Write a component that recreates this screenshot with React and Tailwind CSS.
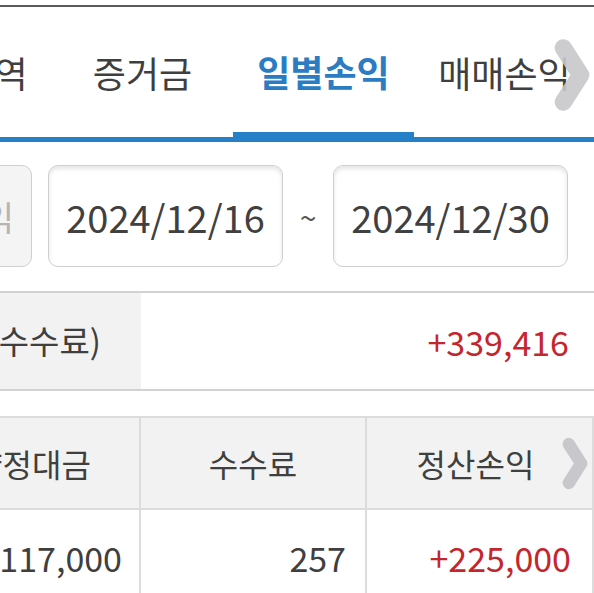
import React from 'react';

const font = "font-['Noto_Sans_CJK_KR','Noto_Sans',sans-serif]";

function Chevron({ className, width = 13 }) {
  return (
    <svg viewBox="0 0 30 60" className={className} fill="none">
      <polyline points="8,8 22,30 8,52" stroke="#c8c8cc" strokeWidth={width} strokeLinecap="round" strokeLinejoin="round" />
    </svg>
  );
}

function Tabs() {
  const tabs = ["체결내역", "증거금", "일별손익", "매매손익"];
  return (
    <div className="relative overflow-hidden border-b-[5px] border-[#2680c8]">
      <div className="flex ml-[-129px]">
        {tabs.map((t) => (
          <div
            key={t}
            className={
              "w-[181px] h-[130px] shrink-0 flex items-center justify-center text-[36px] " +
              (t === "일별손익" ? "text-[#2b7cc3] font-bold border-b-[5px] border-[#2680c8] pt-[3px]" : "text-[#3f3f3f]")
            }
          >
            {t}
          </div>
        ))}
      </div>
      <Chevron className="absolute left-[553px] top-[31px] w-[38px] h-[74px] opacity-90" width={14} />
    </div>
  );
}

function DateRow() {
  return (
    <div className="overflow-hidden pt-[23px] pb-[24px]">
      <div className="flex items-center">
        <div className="w-[120px] ml-[-88px] h-[102px] shrink-0 rounded-[10px] border-[1.5px] border-[#cfcfcf] bg-[#f4f4f4] flex items-center justify-end pr-[17px] text-[34px] text-[#b4b4b4]">
          손익
        </div>
        <div className="ml-[16px] w-[235px] h-[102px] shrink-0 rounded-[10px] border-[1.5px] border-[#cfcfcf] bg-white shadow-[inset_0_3px_4px_rgba(0,0,0,0.10)] flex items-center justify-center text-[38px] text-[#404040]">
          2024/12/16
        </div>
        <div className="w-[50px] shrink-0 text-center text-[30px] text-[#555]">~</div>
        <div className="w-[235px] h-[102px] shrink-0 rounded-[10px] border-[1.5px] border-[#cfcfcf] bg-white shadow-[inset_0_3px_4px_rgba(0,0,0,0.10)] flex items-center justify-center text-[38px] text-[#404040]">
          2024/12/30
        </div>
      </div>
    </div>
  );
}

function Summary() {
  return (
    <div className="flex h-[100px] border-y-2 border-[#d2d2d2] overflow-hidden">
      <div className="w-[141px] shrink-0 bg-[#f2f2f2] flex items-center justify-end pr-[40px] whitespace-nowrap text-[33px] text-[#3f3f3f]">
        손익 -수수료)
      </div>
      <div className="flex-1 flex items-center justify-end pr-[25px] text-[34px] text-[#c4262e]">
        +339,416
      </div>
    </div>
  );
}

function Table() {
  return (
    <div className="relative mt-[25px] overflow-hidden border-r-2 border-[#dcdcdc]">
      <div className="flex ml-[-85px] h-[94px] bg-[#f2f2f2] border-y-2 border-[#dcdcdc] text-[32px] text-[#3f3f3f]">
        <div className="w-[226px] shrink-0 flex items-center justify-center pl-[10px] border-r-2 border-[#dcdcdc]">약정대금</div>
        <div className="w-[226px] shrink-0 flex items-center justify-center border-r-2 border-[#dcdcdc]">수수료</div>
        <div className="flex-1 flex items-center justify-center pr-[8px]">정산손익</div>
      </div>
      <div className="flex ml-[-85px] h-[95px] text-[34px] text-[#3f3f3f]">
        <div className="w-[226px] shrink-0 flex items-center justify-end pr-[17px] border-r-2 border-[#dcdcdc]">11,117,000</div>
        <div className="w-[226px] shrink-0 flex items-center justify-end pr-[19px] border-r-2 border-[#dcdcdc]">257</div>
        <div className="flex-1 flex items-center justify-end pr-[21px] text-[#c4262e]">+225,000</div>
      </div>
      <Chevron className="absolute left-[558px] top-[21px] w-[34px] h-[53px]" width={14} />
    </div>
  );
}

export default function App() {
  return (
    <div className={"w-[594px] h-[593px] overflow-hidden bg-white " + font}>
      <div className="mt-[5px] border-t-2 border-[#5b5b5b]" />
      <Tabs />
      <DateRow />
      <Summary />
      <Table />
    </div>
  );
}
